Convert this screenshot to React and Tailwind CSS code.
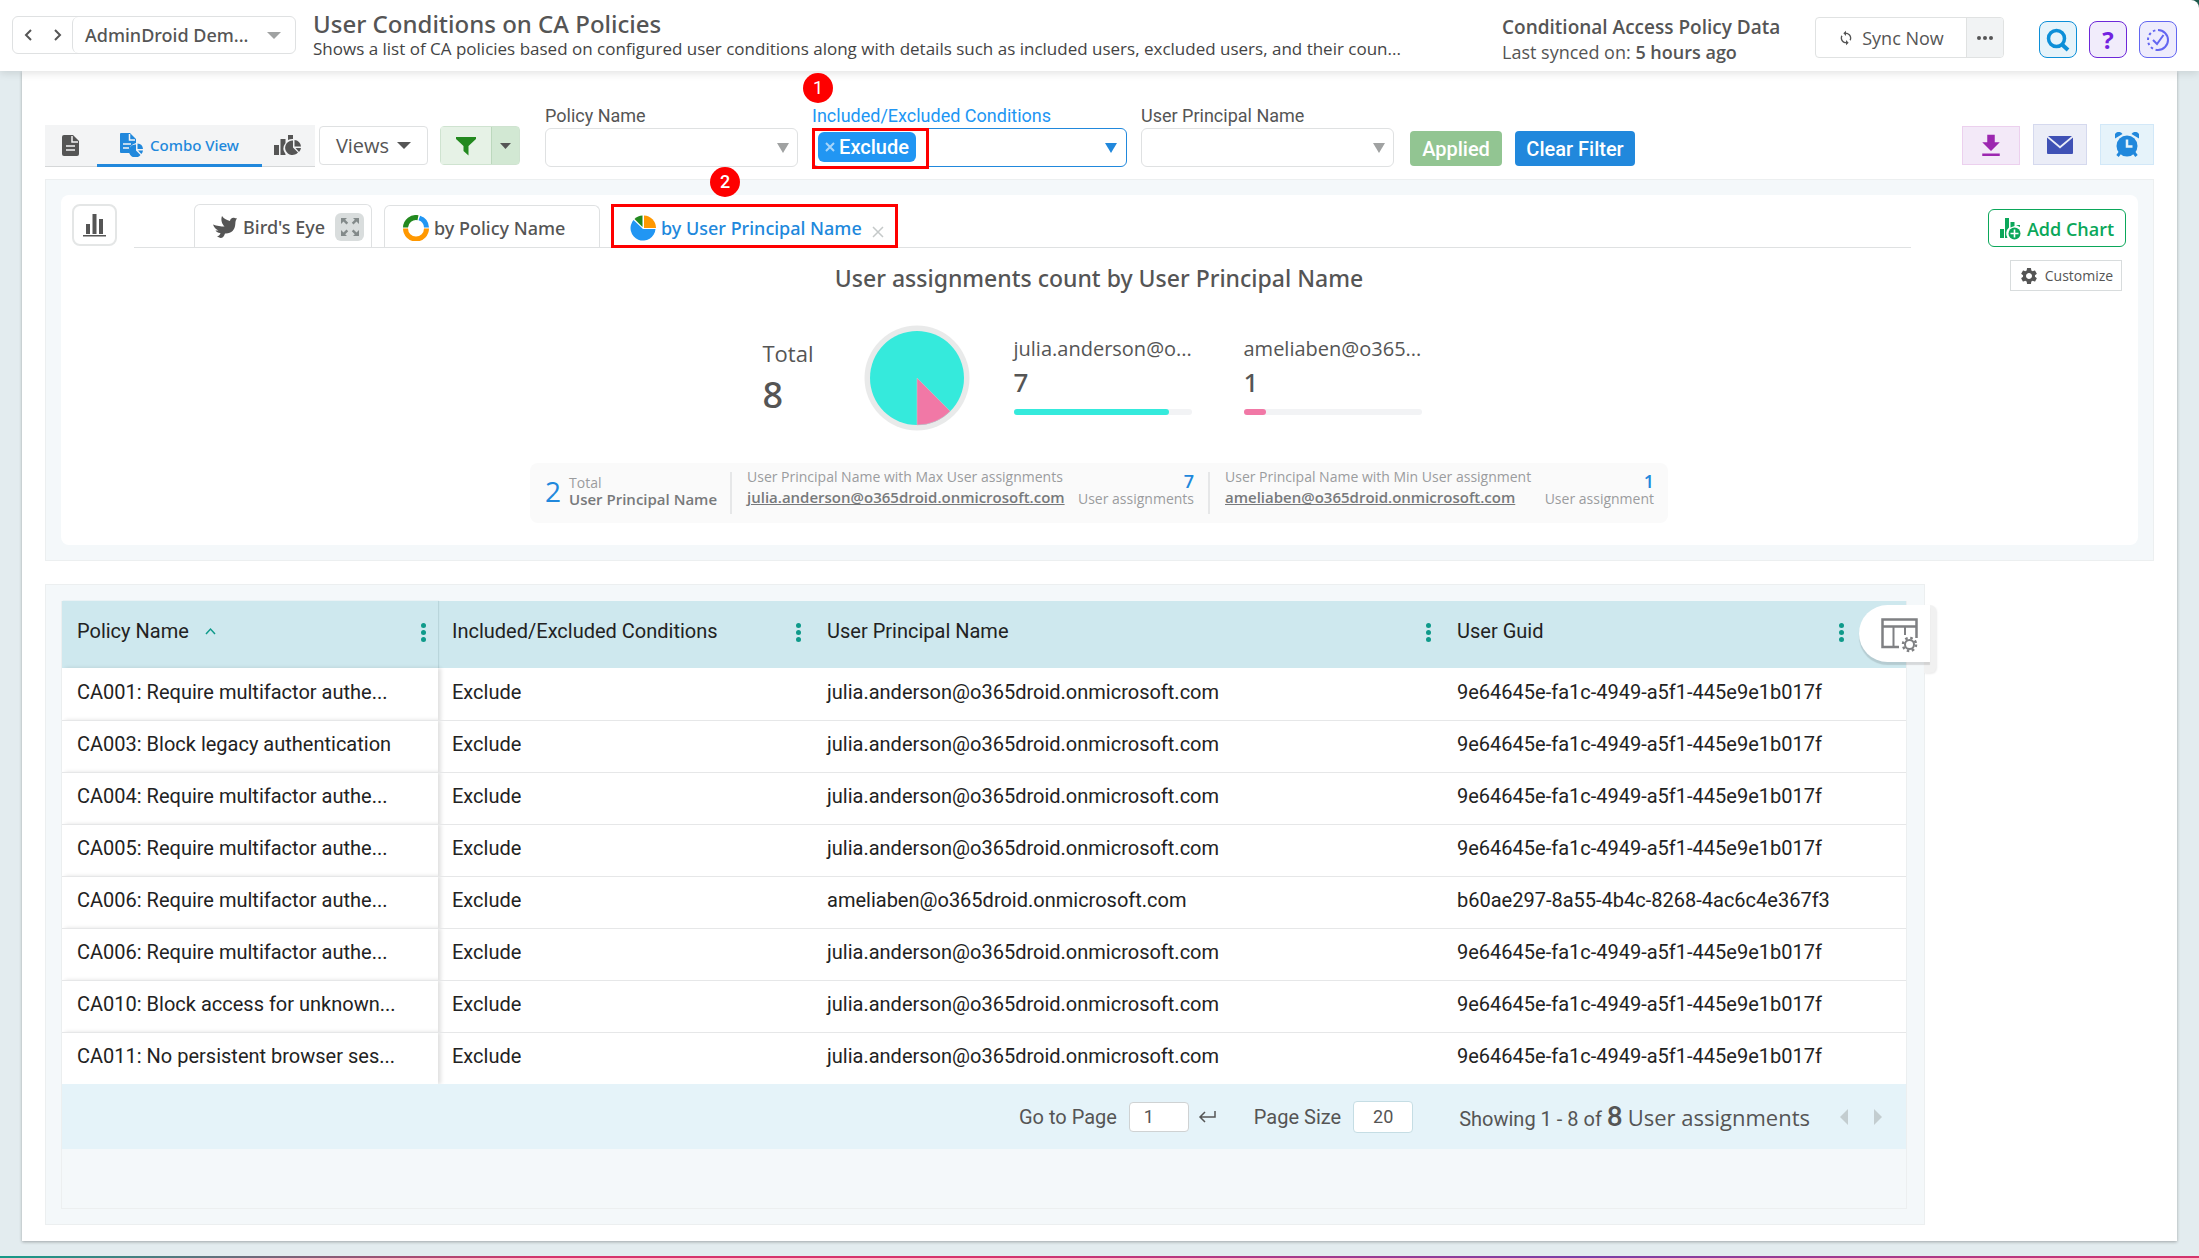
import { useState } from "react";
import { MdFileDownload, MdSettings, MdSync } from "react-icons/md";


const rows = [
  { id: 1, policy: "CA001: Require multifactor authe...", user: "julia.anderson", guid: "9e64645e-fa1c-4949-a5f1-445e9e1b017f" },
  { id: 2, policy: "CA003: Block legacy authentication", user: "julia.anderson", guid: "9e64645e-fa1c-4949-a5f1-445e9e1b017f" },
  { id: 3, policy: "CA004: Require multifactor authe...", user: "julia.anderson", guid: "9e64645e-fa1c-4949-a5f1-445e9e1b017f" },
  { id: 4, policy: "CA005: Require multifactor authe...", user: "julia.anderson", guid: "9e64645e-fa1c-4949-a5f1-445e9e1b017f" },
  { id: 5, policy: "CA006: Require multifactor authe...", user: "ameliaben", guid: "b60ae297-8a55-4b4c-8268-4ac6c4e367f3" },
  { id: 6, policy: "CA006: Require multifactor authe...", user: "julia.anderson", guid: "9e64645e-fa1c-4949-a5f1-445e9e1b017f" },
  { id: 7, policy: "CA010: Block access for unknown...", user: "julia.anderson", guid: "9e64645e-fa1c-4949-a5f1-445e9e1b017f" },
  { id: 8, policy: "CA011: No persistent browser ses...", user: "julia.anderson", guid: "9e64645e-fa1c-4949-a5f1-445e9e1b017f" },
];

const columns = [
  { name: "Policy Name", sorted: true },
  { name: "Included/Excluded Conditions" },
  { name: "User Principal Name" },
  { name: "User Guid" },
];

const total = 8;

const chartUsers = [
  { name: "julia.anderson@o...", count: 7, color: "bg-[#35eadc]" },
  { name: "ameliaben@o365...", count: 1, color: "bg-[#f178a6]" },
];


function Caret({ className }) {
  return (
    <svg viewBox="0 0 12 8" preserveAspectRatio="none" className={className} fill="currentColor" aria-hidden="true">
      <path d="M0 0h12L6 8z" />
    </svg>
  );
}

function FileIcon() {
  return (
    <svg viewBox="0 0 17 21" className="w-[17px] h-[21px]" aria-hidden="true">
      <path fill="#555" d="M2 0h9l6 6v13a2 2 0 0 1-2 2H2a2 2 0 0 1-2-2V2a2 2 0 0 1 2-2z" />
      <path stroke="#f3f4f5" strokeWidth="1.5" fill="none" d="M10 1v6h6M4 11h9M4 15h9" />
    </svg>
  );
}

function ComboIcon() {
  return (
    <svg viewBox="0 0 23 24" className="w-[23px] h-6" aria-hidden="true">
      <path fill="#2188dc" d="M1 0h9l6 6v4a7.500 7.500 0 0 0-6 10H1a1 1 0 0 1-1-1V1a1 1 0 0 1 1-1z" />
      <path stroke="#f3f4f5" strokeWidth="1.500" fill="none" d="M9.500 1v6H15M3 11h8M3 15h6" />
      <path fill="#2188dc" d="M16 11.500V17.500L20.500 22A6.500 6.500 0 1 1 16 11.500z" />
      <path fill="#2188dc" d="M17.500 10.500a6 6 0 0 1 5.500 5.500h-5.500zM18 17.500h5a6 6 0 0 1-1.700 3.500z" />
    </svg>
  );
}

function ChartClockIcon() {
  return (
    <svg viewBox="0 0 27 21" className="w-[27px] h-[21px]" fill="#555" aria-hidden="true">
      <path d="M0 10h5v10H0zM6.500 4h5v4a9 9 0 0 0 0 11v1h-5zM14 0h5v4a9 9 0 0 0-5 1z" />
      <path d="M19 5.500v7l5 5A7.300 7.300 0 1 1 19 5.500z" />
      <path d="M20.500 5a7 7 0 0 1 6.500 6.500h-6.500zM21.500 13H27a7 7 0 0 1-2 4z" />
    </svg>
  );
}

function FunnelIcon() {
  return (
    <svg viewBox="0 0 20 20" className="w-5 h-5" fill="#23891f" aria-hidden="true">
      <path d="M0 1h20v2l-7.500 7v9.500L7.500 15v-5L0 3z" />
    </svg>
  );
}

function BarsIcon() {
  return (
    <svg viewBox="0 0 23 23" className="w-[23px] h-[23px]" fill="#555" aria-hidden="true">
      <path d="M3 10h4v10H3zM9.500 0h4v20h-4zM16 5h4v15h-4zM0 21h23v1.500H0z" />
    </svg>
  );
}

function BirdIcon() {
  return (
    <svg viewBox="0 0 24 22" className="w-6 h-[22px]" fill="#555" aria-hidden="true">
      <path d="M9 0c2 3 5 4 8 5 0-2 2-3.500 4-3.200 1 .1 1.700.7 3 .7-1.500 1.500-1.500 3-1.700 5.500C22 14 18 18 12 17.500c-.8 2.500-2 4.500-4.500 4.500L4 20.500c2-.5 3-1.500 3.500-3.500-2 .2-4-.8-5-2.500h3C3 13.500 1 11.500 0 8.500c4 1.500 8 2 11.500 2C9 8 7.500 4 9 0z" />
    </svg>
  );
}

function ExpandIcon() {
  return (
    <svg viewBox="0 0 20 20" className="w-5 h-5" fill="#838a8a" aria-hidden="true">
      <path d="M1 1h6L5.200 2.800l3 3-1.700 1.700-3-3L1 7zM19 1v6l-2.500-2.500-3 3-1.700-1.700 3-3L13 1zM1 19v-6l2.500 2.500 3-3 1.700 1.700-3 3L7 19zM19 19h-6l1.800-1.800-3-3 1.700-1.700 3 3L19 13z" />
    </svg>
  );
}

function DonutIcon() {
  return (
    <svg viewBox="0 0 26 26" className="w-[26px] h-[26px]" fill="none" strokeWidth="5" aria-hidden="true">
      <path stroke="#23891f" d="M2.500 12.500A10.500 10.500 0 0 1 15 2.700" />
      <path stroke="#2196f3" d="M16.300 3A10.500 10.500 0 0 1 23.500 12.500" />
      <path stroke="#ff9800" d="M2.500 13.500a10.500 10.500 0 0 0 21 0" />
    </svg>
  );
}

function PieIcon() {
  return (
    <svg viewBox="0 0 26 26" className="w-[26px] h-[26px]" aria-hidden="true">
      <path fill="#2196f3" d="M13 14h12.500A12.500 12.500 0 1 1 3.500 5z" />
      <path fill="#23891f" d="M12.500 12L4.500 4a11.500 11.500 0 0 1 8-3.500z" />
      <path fill="#ff9800" d="M14 13V.5A12.500 12.500 0 0 1 26 13z" />
    </svg>
  );
}

function AddChartIcon() {
  return (
    <svg viewBox="0 0 21 22" className="w-[21px] h-[22px]" aria-hidden="true">
      <path fill="#0ba75a" d="M0 11h4v9H0zM5 0h4v9.500a8 8 0 0 0-1.500 10.500H5zM10.500 4h4v4l-4 1.500zM16 7h4v2z" />
      <circle cx="14.500" cy="15.500" r="6" fill="#0ba75a" />
      <path stroke="#fff" strokeWidth="1.600" d="M10.500 15.500h8M14.500 11.500v8" />
    </svg>
  );
}

function MailIcon() {
  return (
    <svg viewBox="0 0 26 18" className="w-[26px] h-[18px]" fill="#3f51b5" aria-hidden="true">
      <path d="M1 0h24L13 10zM0 1.500l13 11 13-11V17a1 1 0 0 1-1 1H1a1 1 0 0 1-1-1z" />
    </svg>
  );
}

function AlarmIcon() {
  return (
    <svg viewBox="0 0 24 25" className="w-6 h-[25px]" aria-hidden="true">
      <path stroke="#2188dc" strokeWidth="3" d="M5.500 20L2.500 24M18.500 20l3 4" />
      <circle cx="12" cy="14" r="10.500" fill="#2188dc" />
      <path fill="#2188dc" d="M0 6.500A4.200 4.200 0 0 1 7.500 2zM24 6.500A4.200 4.200 0 0 0 16.500 2z" />
      <path stroke="#e6f3fa" strokeWidth="2.500" fill="none" d="M12 7.500v7h5.500" />
    </svg>
  );
}

function SearchIcon() {
  return (
    <svg viewBox="0 0 24 24" className="w-6 h-6" fill="none" stroke="#0c8fd8" aria-hidden="true">
      <circle cx="10.500" cy="10.500" r="8" strokeWidth="3.500" />
      <path strokeWidth="4" d="M16 16.500l6 5.500" />
    </svg>
  );
}

function CheckCircleIcon() {
  return (
    <svg viewBox="0 0 24 24" className="w-6 h-6" fill="none" stroke="#6366f1" strokeWidth="2" aria-hidden="true">
      <path d="M12 2a10 10 0 0 1 0 20" />
      <path strokeDasharray="2.500 2.700" d="M12 22a10 10 0 0 1 0-20" />
      <path d="M7 12l4 4 6.500-9" />
    </svg>
  );
}

function ColumnsGearIcon() {
  return (
    <svg viewBox="0 0 37 35" className="w-[37px] h-[35px]" fill="none" stroke="#7f8083" strokeWidth="2" aria-hidden="true">
      <path strokeWidth="2.500" d="M18 29H1.500V1.500H35.500V20M1 8.500h35" />
      <path d="M12.500 8.500V29M24 8.500V17" />
      <circle cx="28.500" cy="26.500" r="4.500" />
      <circle cx="28.500" cy="26.500" r="6.500" strokeWidth="2.500" strokeDasharray="2.500 2.600" />
    </svg>
  );
}


function Callout({ number, className }) {
  return (
    <span className={`absolute z-10 flex items-center justify-center w-[30px] h-[30px] rounded-full bg-[#fe0000] text-white text-lg font-[Roboto,sans-serif] ${className}`}>
      {number}
    </span>
  );
}


function Header() {
  return (
    <div className="bg-[#1d5a4c] relative z-10">
      <header className="flex items-start h-[71px] pl-3 pr-[22px] bg-white rounded-tr-lg shadow-[0_2px_8px_rgba(0,0,0,0.12)]">

        <div className="flex mt-4 h-[38px] w-[284px] shrink-0 border border-[#dfe1e2] rounded-md">
          <button aria-label="Back" className="w-[30px] flex items-center justify-center">
            <svg viewBox="0 0 8 12" className="w-2 h-3" fill="none" stroke="#555" strokeWidth="2"><path d="M7 1L2 6l5 5" /></svg>
          </button>
          <button aria-label="Forward" className="w-[29px] flex items-center justify-center">
            <svg viewBox="0 0 8 12" className="w-2 h-3" fill="none" stroke="#555" strokeWidth="2"><path d="M1 1l5 5-5 5" /></svg>
          </button>
          <button className="flex flex-1 items-center justify-between border-l border-[#dfe1e2] rounded-md pl-3 pr-[14px] text-lg font-medium font-['Noto_Sans',sans-serif]">
            AdminDroid Dem...
            <Caret className="w-[14px] h-[7px] text-[#a0a2a2]" />
          </button>
        </div>

        <div className="ml-[17px] pt-[9px] min-w-0">
          <h1 className="text-2xl leading-[30px] font-medium font-['Noto_Sans',sans-serif]">User Conditions on CA Policies</h1>
          <p className="text-[17px] leading-5 whitespace-nowrap text-[#444]">
            Shows a list of CA policies based on configured user conditions along with details such as included users, excluded users, and their coun...
          </p>
        </div>

        <div className="ml-auto flex">
          <div className="w-[313px] pt-[14px]">
            <div className="text-[19px] leading-[26px] font-semibold whitespace-nowrap">Conditional Access Policy Data</div>
            <div className="text-lg leading-6">
              Last synced on: <span className="font-semibold">5 hours ago</span>
            </div>
          </div>

          <div className="flex mt-[17px] h-[41px] w-[189px] border border-[#e0e2e2] rounded-sm overflow-hidden">
            <button className="flex flex-1 items-center justify-center gap-2 text-lg">
              <MdSync className="w-4 h-4" />
              Sync Now
            </button>
            <button aria-label="More" className="w-[37px] flex items-center justify-center gap-[2px] border-l border-[#e0e2e2] bg-[#f1f3f4]">
              <i className="w-1 h-1 rounded-full bg-[#555]" />
              <i className="w-1 h-1 rounded-full bg-[#555]" />
              <i className="w-1 h-1 rounded-full bg-[#555]" />
            </button>
          </div>

          <div className="flex gap-3 mt-[21px] ml-[35px]">
            <button aria-label="Search" className="flex items-center justify-center w-[38px] h-[37px] rounded-lg border border-[#0c8fd8] bg-[#e6f3fa]">
              <SearchIcon />
            </button>
            <button className="flex items-center justify-center w-[38px] h-[37px] rounded-lg border border-[#6d28d9] bg-[#f1ecfb] text-[#7222e0] text-2xl font-bold">
              ?
            </button>
            <button aria-label="Tasks" className="flex items-center justify-center w-[38px] h-[37px] rounded-lg border border-[#6366f1] bg-[#eeecfc]">
              <CheckCircleIcon />
            </button>
          </div>
        </div>

      </header>
    </div>
  );
}


function FilterSelect({ id, label, className }) {
  return (
    <div className={className}>
      <label htmlFor={id} className="block text-lg leading-6">{label}</label>
      <div className="relative">
        <select id={id} className="block w-full h-[39px] px-3 border border-[#dfe1e2] rounded-md appearance-none bg-white">
          <option></option>
        </select>
        <Caret className="absolute right-[9px] top-[15px] w-3 h-[10px] text-[#a0a2a2] pointer-events-none" />
      </div>
    </div>
  );
}


function Toolbar() {
  const [tags, setTags] = useState(["Exclude"]);

  return (
    <div className="flex items-end">

      <div className="flex h-[42px] w-[270px] bg-[#f3f4f5] border-b border-[#d5d7d8]">
        <button aria-label="Report view" className="flex items-center justify-center w-[50px]">
          <FileIcon />
        </button>
        <button className="flex items-center justify-center gap-[7px] ml-[2px] w-[165px] -mb-px border-b-[3px] border-[#2188dc] text-[#2188dc] text-[15px] font-medium font-['Noto_Sans',sans-serif]">
          <ComboIcon />
          <span className="pt-[2px]">Combo View</span>
        </button>
        <button aria-label="Chart view" className="flex items-center justify-center w-[51px]">
          <ChartClockIcon />
        </button>
      </div>

      <button className="flex items-center justify-center gap-2 ml-1 mb-[2px] w-[109px] h-[39px] border border-[#dfe1e2] rounded-sm text-xl">
        Views
        <Caret className="w-[14px] h-[7px]" />
      </button>

      <div className="flex ml-3 mb-[2px] h-[39px] w-20 border border-[#cfe3d0] rounded-sm">
        <button aria-label="Filter" className="flex items-center justify-center w-[50px] bg-[#e6f2e6]">
          <FunnelIcon />
        </button>
        <button aria-label="Filter options" className="flex items-center justify-center flex-1 bg-[#d2e8d3] border-l border-[#bcd8bd]">
          <Caret className="w-[11px] h-[6px]" />
        </button>
      </div>

      <div className="flex ml-[25px] gap-[14px] font-[Roboto,sans-serif]">
        <FilterSelect id="policy" label="Policy Name" className="w-[253px]" />

        <div className="relative w-[315px]">
          <Callout number="1" className="left-[-9px] top-[-31px]" />
          <label htmlFor="conditions" className="block text-lg leading-6 text-[#2196f3]">
            Included/Excluded Conditions
          </label>
          <div className="relative flex items-center h-[39px] px-[5px] border border-[#2188dc] rounded-md">
            {
              tags.map((tag) => (
                <span key={tag} className="flex items-center gap-1 h-[30px] mb-[2px] w-[98px] shrink-0 justify-center rounded-md bg-[#2196f3] text-white text-xl font-medium">
                  <button
                    aria-label={`Remove ${tag}`}
                    onClick={() => setTags(tags.filter((t) => t !== tag))}
                  >
                    <svg viewBox="0 0 10 10" className="w-[10px] h-[10px]" stroke="#a6d5fa" strokeWidth="2"><path d="M1 1l8 8M9 1L1 9" /></svg>
                  </button>
                  {tag}
                </span>
              ))
            }
            <input id="conditions" className="flex-1 min-w-0 outline-none ml-4" />
            <Caret className="w-3 h-[10px] mr-1 text-[#2188dc]" />
            <div className="absolute left-[-1px] top-[-1px] w-[117px] h-[41px] border-[3px] border-[#fe0000] pointer-events-none" />
          </div>
        </div>

        <FilterSelect id="upn" label="User Principal Name" className="w-[253px]" />
      </div>

      <div className="flex ml-4 mb-px gap-[13px] font-[Roboto,sans-serif] text-xl font-medium text-white">
        <button className="h-[35px] w-[92px] rounded-sm bg-[#92c592]">Applied</button>
        <button className="h-[35px] w-[120px] rounded-sm bg-[#2188dc]">Clear Filter</button>
      </div>

      <div className="flex items-end gap-[13px] ml-auto mb-[2px]">
        <button aria-label="Download" className="flex items-center justify-center w-[58px] h-[39px] border border-[#ecd0ee] bg-[#f3e9f8] text-[#9c27b0]">
          <MdFileDownload className="w-[30px] h-[30px]" />
        </button>
        <button aria-label="Email" className="flex items-center justify-center w-[54px] h-[41px] border border-[#d5d9ee] bg-[#ebedf7]">
          <MailIcon />
        </button>
        <button aria-label="Schedule" className="flex items-center justify-center w-[54px] h-[41px] border border-[#d2e8f8] bg-[#e6f3fa]">
          <AlarmIcon />
        </button>
      </div>

    </div>
  );
}


function UserPie() {
  return (
    <svg viewBox="0 0 106 106" className="w-[106px] h-[106px]" role="img" aria-label="User assignments pie chart">
      <circle cx="53" cy="53" r="52.500" fill="#e9eaea" />
      <circle cx="53" cy="53" r="47" fill="#35eadc" />
      <path d="M53 53v47a47 47 0 0 0 33.200-13.800z" fill="#f178a6" stroke="#cfc8cc" strokeWidth="0.500" />
    </svg>
  );
}


function ChartPanel() {
  return (
    <section className="mt-3 px-[15px] py-[15px] border border-[#eceff0] bg-[#f4f8fa]">
      <div className="bg-white rounded-lg pt-[9px] pl-[11px] pr-3 pb-[22px]">

        <div className="flex items-start">
          <button aria-label="Charts" className="flex items-center justify-center w-[45px] h-[42px] border-2 border-[#e4e6e6] rounded-lg">
            <BarsIcon />
          </button>

          <div className="flex items-end flex-1 h-11 ml-[17px] pl-[60px] border-b border-[#dfe1e2] text-lg font-medium font-['Noto_Sans',sans-serif]">
            <button className="flex items-center h-[43px] w-[178px] pl-[18px] pt-[2px] gap-[6px] border border-b-0 border-[#dfe1e2] rounded-t-md">
              <BirdIcon />
              <span className="whitespace-nowrap">Bird's Eye</span>
              <span className="flex items-center justify-center ml-1 w-[29px] h-7 rounded-md bg-[#d9dddd]">
                <ExpandIcon />
              </span>
            </button>

            <button className="flex items-center h-[42px] w-[216px] ml-3 pl-[18px] pt-[2px] gap-[5px] border border-b-0 border-[#dfe1e2] rounded-t-md">
              <DonutIcon />
              by Policy Name
            </button>

            <div className="relative ml-[11px] -mb-px">
              <Callout number="2" className="left-[99px] top-[-37px]" />
              <div className="flex items-center h-11 w-[287px] pl-4 pt-1 border-[3px] border-[#fe0000] bg-white text-[#2188dc]">
                <button className="flex items-center gap-[5px] whitespace-nowrap">
                  <PieIcon />
                  by User Principal Name
                </button>
                <button aria-label="Close" className="ml-[10px] mt-2">
                  <svg viewBox="0 0 12 12" className="w-3 h-3" stroke="#c5c9c9" strokeWidth="1.500"><path d="M1 1l10 10M11 1L1 11" /></svg>
                </button>
              </div>
            </div>
          </div>

          <div className="flex flex-col items-end w-[215px] ml-auto pt-[5px]">
            <button className="flex items-center justify-center gap-[6px] w-[138px] h-[38px] pt-[2px] border border-[#0ba75a] rounded-md text-[#0ba75a] text-lg font-semibold whitespace-nowrap">
              <AddChartIcon />
              Add Chart
            </button>
            <button className="flex items-center justify-center gap-[6px] mt-[13px] mr-1 w-28 h-[31px] border border-[#d8dcdd] text-sm">
              <MdSettings className="w-5 h-5" />
              Customize
            </button>
          </div>
        </div>

        <h2 className="-mt-[29px] text-center text-[23px] leading-8 font-medium font-['Noto_Sans',sans-serif]">
          User assignments count by User Principal Name
        </h2>

        <div className="flex justify-center mt-[31px]">
          <div className="w-[101px] pt-[13px]">
            <div className="text-[22px] leading-[30px]">Total</div>
            <div className="text-4xl leading-[54px] font-medium font-['Noto_Sans',sans-serif]">{total}</div>
          </div>

          <UserPie />

          <div className="flex gap-[52px] ml-11 mr-[14px] pt-[9px]">
            {
              chartUsers.map((user) => (
                <div key={user.name} className="w-[178px]">
                  <div className="text-xl leading-[30px] whitespace-nowrap">{user.name}</div>
                  <div className="text-[26px] leading-9 font-medium font-['Noto_Sans',sans-serif]">{user.count}</div>
                  <div className="mt-[9px] h-[6px] rounded-full bg-[#f2f3f5]">
                    <div
                      className={`h-[6px] rounded-full ${user.color}`}
                      style={{ width: `${(user.count / total) * 100}%` }}
                    />
                  </div>
                </div>
              ))
            }
          </div>
        </div>

        <div className="flex items-start mx-auto mt-8 pt-[9px] h-[60px] w-[1138px] rounded-lg bg-[#fafafa] text-sm text-[#9a9c9e]">
          <div className="flex items-center gap-2 w-[202px] h-[42px] pb-1 pl-[15px] border-r-2 border-[#e6e7e8]">
            <span className="text-[28px] text-[#2188dc]">2</span>
            <div className="leading-[17px] whitespace-nowrap">
              Total
              <div className="text-[15px] font-semibold text-[#77797b]">User Principal Name</div>
            </div>
          </div>

          <div className="flex justify-between w-[478px] h-[42px] pl-[15px] pr-[14px] border-r-2 border-[#e6e7e8] whitespace-nowrap">
            <div className="leading-[21px] -mt-[6px]">
              User Principal Name with Max User assignments
              <div>
                <a href="#julia" className="text-[15px] font-semibold text-[#77797b] underline">julia.anderson@o365droid.onmicrosoft.com</a>
              </div>
            </div>
            <div className="text-right leading-[17px]">
              <div className="text-lg leading-[18px] text-[#2188dc] font-semibold">7</div>
              User assignments
            </div>
          </div>

          <div className="flex justify-between flex-1 pl-[15px] pr-[14px] whitespace-nowrap">
            <div className="leading-[21px] -mt-[6px]">
              User Principal Name with Min User assignment
              <div>
                <a href="#amelia" className="text-[15px] font-semibold text-[#77797b] underline">ameliaben@o365droid.onmicrosoft.com</a>
              </div>
            </div>
            <div className="text-right leading-[17px]">
              <div className="text-lg leading-[18px] text-[#2188dc] font-semibold">1</div>
              User assignment
            </div>
          </div>
        </div>

      </div>
    </section>
  );
}


function TablePanel() {
  return (
    <section className="relative mt-[23px] mr-[229px] pl-[15px] pr-[17px] pt-4 pb-[15px] border border-[#eceff0] bg-[#f4f8fa]">
      <div className="border border-t-0 border-[#eceff0] pb-[59px]">

        <table className="w-full table-fixed border-collapse text-[#222] text-xl text-left font-[Roboto,sans-serif]">
          <colgroup>
            <col className="w-[376px]" />
            <col className="w-[375px]" />
            <col className="w-[630px]" />
            <col />
          </colgroup>
          <thead>
            <tr className="h-[67px] bg-[#cee8ee]">
              {
                columns.map((column, i) => (
                  <th key={column.name} className={i === 0 ? "pl-[15px] font-normal shadow-[1px_0_1px_#b9d5db]" : "pl-[14px] font-normal"}>
                    <div className={i === 3 ? "flex items-center justify-between pb-2 pr-[62px]" : "flex items-center justify-between pb-2 pr-3"}>
                      <span className="flex items-center gap-4">
                        {column.name}
                        {
                          column.sorted &&
                          <svg viewBox="0 0 11 8" className="w-[11px] h-2" fill="none" stroke="#0e9a8a" strokeWidth="1.500"><path d="M1 7l4.500-5L10 7" /></svg>
                        }
                      </span>
                      <button aria-label={`${column.name} menu`} className="flex flex-col gap-[2px] mt-1">
                        <i className="w-[5px] h-[5px] rounded-full bg-[#0e9a8a]" />
                        <i className="w-[5px] h-[5px] rounded-full bg-[#0e9a8a]" />
                        <i className="w-[5px] h-[5px] rounded-full bg-[#0e9a8a]" />
                      </button>
                    </div>
                  </th>
                ))
              }
            </tr>
          </thead>
          <tbody>
            {
              rows.map((row) => (
                <tr key={row.id} className="h-[52px] bg-white border-b border-[#e6e7e8] last:border-b-0">
                  <td className="pl-[15px] pb-1 whitespace-nowrap shadow-[3px_0_4px_rgba(0,0,0,0.12)]">{row.policy}</td>
                  <td className="pl-[14px] pb-1">Exclude</td>
                  <td className="pl-[14px] pb-1">{row.user}@o365droid.onmicrosoft.com</td>
                  <td className="pl-[14px] pb-1">{row.guid}</td>
                </tr>
              ))
            }
          </tbody>
        </table>

        <div className="flex items-center justify-end h-[65px] pr-6 bg-[#e5f3f9] text-xl font-[Roboto,sans-serif]">
          <label htmlFor="page">Go to Page</label>
          <input id="page" defaultValue="1" className="ml-3 w-[60px] h-[30px] pl-[14px] text-lg bg-white border border-[#cfd2d3] rounded-sm" />
          <svg viewBox="0 0 18 12" className="ml-[9px] w-[18px] h-3" fill="none" stroke="#555" strokeWidth="1.500"><path d="M17 0v6H2M7 1L2 6l5 5" /></svg>
          <label htmlFor="size" className="ml-[38px]">Page Size</label>
          <input id="size" defaultValue="20" className="ml-3 w-[60px] h-8 text-center text-lg bg-white border border-[#c5dde4] rounded-sm" />
          <span className="ml-[46px] whitespace-nowrap">
            Showing 1 - 8 of <span className="text-[28px] font-medium">8</span>{" "}
            <span className="text-[22px] font-['Open_Sans',sans-serif]">User assignments</span>
          </span>
          <button aria-label="Previous page" className="ml-[30px]">
            <svg viewBox="0 0 8 16" className="w-2 h-4" fill="#c3cdd0"><path d="M8 0v16L0 8z" /></svg>
          </button>
          <button aria-label="Next page" className="ml-[26px]">
            <svg viewBox="0 0 8 16" className="w-2 h-4" fill="#c3cdd0"><path d="M0 0v16l8-8z" /></svg>
          </button>
        </div>

      </div>

      {/* column chooser hangs over the right edge of the grid */}
      <div className="absolute right-[-12px] top-5 w-[77px] h-[68px]">
        <div className="absolute right-0 top-0 w-3 h-[68px] rounded-r-md bg-[#f1f1f1] shadow-[1px_1px_2px_rgba(0,0,0,0.08)]" />
        <button aria-label="Choose columns" className="absolute left-0 top-0 flex items-center pl-[22px] pt-1 w-[71px] h-[57px] rounded-l-full bg-white shadow-[0_3px_1px_rgba(0,0,0,0.12)]">
          <ColumnsGearIcon />
        </button>
      </div>
    </section>
  );
}


function App() {
  return (
    <div className="flex flex-col min-h-screen bg-[#e3ecef] text-[#555] font-['Open_Sans',sans-serif]">

      <Header />

      <main className="flex-1 mx-[22px] mb-[15px] px-[23px] pt-[33px] pb-[15px] bg-white shadow-[0_1px_3px_rgba(0,0,0,0.3)]">
        <Toolbar />
        <ChartPanel />
        <TablePanel />
      </main>

      <div className="h-[2px] bg-[linear-gradient(to_right,#169a88,#d6336c_25%,#d6336c_45%,#7a3fa8_72%,#d6336c)]" />

    </div>
  );
}


export default App;
